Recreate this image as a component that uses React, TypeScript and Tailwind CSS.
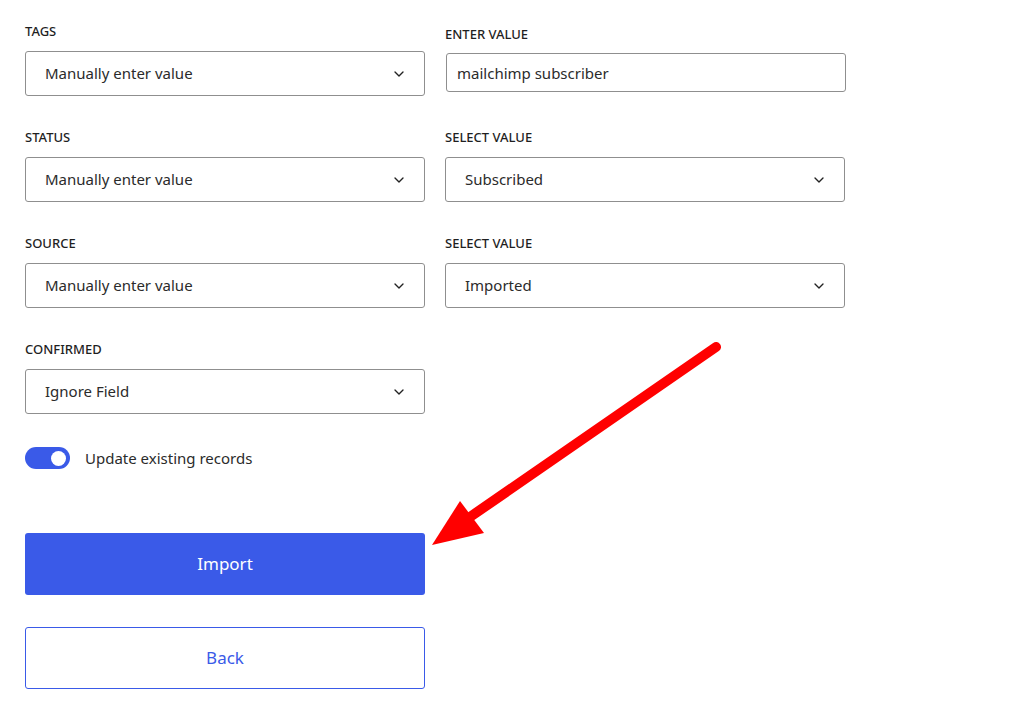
import { ChevronDown } from 'lucide-react'

const font = { fontFamily: '"Noto Sans", "Open Sans", sans-serif' }

function FieldLabel({ children }: { children: string }) {
  return <div className="h-[18px] text-[13px] leading-[18px] font-medium text-[#1f1f1f] mb-[11px]">{children}</div>
}

function SelectBox({ value }: { value: string }) {
  return (
    <div className="flex h-[45px] w-[400px] items-center justify-between rounded-[3px] border border-[#8f8f8f] bg-white pl-[19px] pr-[17px]">
      <span className="text-[15px] text-[#2b2b2b]">{value}</span>
      <ChevronDown size={16} strokeWidth={2} className="text-[#222]" />
    </div>
  )
}

function Field({ label, value }: { label: string; value: string }) {
  return (
    <div>
      <FieldLabel>{label}</FieldLabel>
      <SelectBox value={value} />
    </div>
  )
}

export default function App() {
  return (
    <div className="relative min-h-[702px] w-full bg-white" style={font}>
      <div className="pl-[25px] pt-[22px]">
        <div className="grid grid-cols-[400px_400px] gap-x-[20px] gap-y-[32px]">
          <Field label="TAGS" value="Manually enter value" />
          <div className="pt-[3px]">
            <div className="h-[18px] text-[13px] leading-[18px] font-medium text-[#1f1f1f] mb-[10px]">ENTER VALUE</div>
            <div className="ml-px flex h-[39px] w-[400px] items-center rounded-[3px] border border-[#8f8f8f] bg-white px-[10px] pt-[2px]">
              <span className="text-[15px] text-[#2b2b2b]">mailchimp subscriber</span>
            </div>
          </div>

          <Field label="STATUS" value="Manually enter value" />
          <Field label="SELECT VALUE" value="Subscribed" />

          <Field label="SOURCE" value="Manually enter value" />
          <Field label="SELECT VALUE" value="Imported" />

          <Field label="CONFIRMED" value="Ignore Field" />
        </div>

        <div className="mt-[33px] flex items-center gap-[15px]">
          <div className="flex h-[22px] w-[45px] items-center justify-end rounded-full bg-[#3a5ae8] pr-[4px]">
            <div className="h-[15px] w-[15px] rounded-full bg-white" />
          </div>
          <span className="text-[15px] text-[#2b2b2b]">Update existing records</span>
        </div>

        <button className="mt-[63px] flex h-[62px] w-[400px] items-center justify-center rounded-[3px] bg-[#3a5ae8] text-[17px] text-white">
          Import
        </button>

        <button className="mt-[32px] flex h-[62px] w-[400px] items-center justify-center rounded-[3px] border border-[#3a5ae8] bg-white text-[17px] text-[#3a5ae8]">
          Back
        </button>
      </div>

      {/* annotation arrow */}
      <svg className="pointer-events-none absolute left-0 top-0" width="1023" height="702" viewBox="0 0 1023 702">
        <line x1="716" y1="347" x2="470" y2="517" stroke="#ff0000" strokeWidth="10" strokeLinecap="round" />
        <polygon points="432,545 460,501 484,533" fill="#ff0000" />
      </svg>
    </div>
  )
}
